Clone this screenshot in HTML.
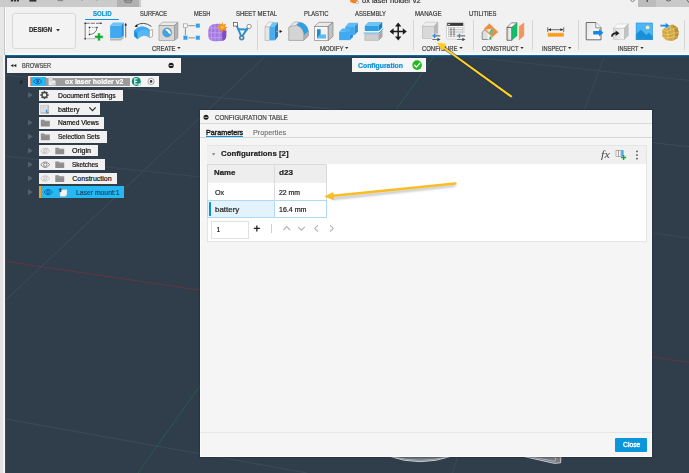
<!DOCTYPE html>
<html>
<head>
<meta charset="utf-8">
<title>ox laser holder v2</title>
<style>
html,body{margin:0;padding:0;}
body{width:689px;height:473px;overflow:hidden;position:relative;background:#303d4b;font-family:"Liberation Sans",sans-serif;}
.a{position:absolute;}
.t{position:absolute;white-space:nowrap;line-height:1;transform-origin:0 50%;-webkit-text-stroke:0.2px currentColor;}
svg.full{position:absolute;left:0;top:0;width:689px;height:473px;}
.sep{position:absolute;top:20px;width:1px;height:30px;background:#d6d6d6;}
.row{position:absolute;height:11px;background:#f1f1f1;left:38.7px;}
</style>
</head>
<body>
<!-- canvas lines -->
<svg class="full" viewBox="0 0 689 473">
<g fill="none" stroke-width="1">
<line x1="469" y1="57" x2="689" y2="80.4" stroke="#3b4855"/>
<line x1="604" y1="57" x2="584.5" y2="109.8" stroke="#3b4855"/>
<line x1="652" y1="233" x2="689" y2="238" stroke="#3b4855"/>
<line x1="6" y1="299.8" x2="264.6" y2="57" stroke="#44515c" stroke-width="0.8"/>
<line x1="6" y1="75.2" x2="689" y2="146.6" stroke="#414e59" stroke-width="0.8"/>
<line x1="6" y1="156.2" x2="200" y2="177" stroke="#3d4a56" stroke-width="0.8"/>
<line x1="5.8" y1="419" x2="200" y2="453.8" stroke="#3d4a57"/>
<line x1="200" y1="453.8" x2="307" y2="473" stroke="#3d4a57"/>
<line x1="457.5" y1="457" x2="452.5" y2="473" stroke="#3b4855"/>
<line x1="6" y1="261.5" x2="689" y2="362.3" stroke="#7a3139" stroke-width="0.7"/>
<line x1="433.5" y1="57" x2="138" y2="473" stroke="#23644f" stroke-width="0.8"/>
</g>
<!-- model outlines below dialog -->
<path d="M388.3 456 Q420 467.4 452.3 456 Z" fill="#70777e" stroke="#dfe4e9" stroke-width="0.8"/>
<path d="M394 457 Q420 463.6 446.6 457" fill="none" stroke="#c4c8cc" stroke-width="0.6"/>
<path d="M519.4 455.5 L554.5 463.4 L560.6 462.8 L561 455.5 Z" fill="#777a7e" stroke="#dfe4e9" stroke-width="0.8"/>
<path d="M530 456.6 L555 461.4 L556 456.6" fill="none" stroke="#c9ccd0" stroke-width="0.6"/>

</svg>

<!-- left strip -->
<div class="a" style="left:0;top:0;width:3.2px;height:473px;background:#e2e2e2;"></div>
<div class="a" style="left:0;top:0;width:3.7px;height:55px;background:#e7e7e7;"></div>
<div class="a" style="left:3.7px;top:0;width:1.3px;height:55px;background:#c6c6c6;"></div>
<div class="a" style="left:3.2px;top:55px;width:1.5px;height:418px;background:#f4f4f4;"></div>
<div class="a" style="left:4.6px;top:55.4px;width:1.7px;height:418px;background:linear-gradient(90deg,#0a7cc0,#0b5d94 45%,#143c58);"></div>

<!-- toolbar -->
<div class="a" style="left:4.9px;top:6px;width:685px;height:49.6px;background:#f1f1f1;"></div>
<div class="a" style="left:5px;top:6px;width:0.9px;height:49px;background:#fbfbfb;"></div>
<div class="a" style="left:4.9px;top:52.4px;width:685px;height:3.1px;background:linear-gradient(#f1f1f1,#fbf9f7 55%,#fbf9f7);"></div>
<div class="a" style="left:4.6px;top:55.4px;width:685px;height:2.1px;background:linear-gradient(#0a7cc0,#0b5d94 45%,#143c58);"></div>
<!-- top strip -->
<div class="a" style="left:0;top:0;width:689px;height:6.5px;background:#f0f0f0;"></div>
<div class="a" style="left:0;top:0;width:141.3px;height:6.5px;background:#cbcbcb;"></div>
<div class="a" style="left:117px;top:0;width:21.9px;height:6.5px;background:#b1b1b1;"></div>
<div class="a" style="left:638px;top:0;width:51px;height:6.5px;background:#c9c9c9;"></div>
<div class="a" style="left:638px;top:0;width:18px;height:6.5px;background:#bcbcbc;"></div>
<div class="a" style="left:352.2px;top:57.9px;width:74px;height:14.3px;background:#f6f6f6;"></div>
<svg class="full" viewBox="0 0 689 473">
<circle cx="417.1" cy="65.1" r="4.8" fill="#20b91f"/>
<path d="M414.6 65.2 L416.4 67.1 L419.8 63.2" fill="none" stroke="#fff" stroke-width="1.3" stroke-linecap="round" stroke-linejoin="round"/>
<!-- top strip cropped icons -->
<g fill="#333">
<rect x="10.8" y="0" width="2.2" height="1.5"/><rect x="13.8" y="0" width="2.2" height="1.5"/><rect x="16.8" y="0" width="2.2" height="1.5"/>
<rect x="29.4" y="0" width="7" height="1.6"/>
</g>
<g fill="#8a8a8a">
<rect x="57.6" y="0" width="5.6" height="1.2"/>
<rect x="81.6" y="0" width="0.8" height="1"/>
<rect x="96.6" y="0" width="0.8" height="1"/>
</g>
<path d="M124.6 0 L125.6 2.6 L131 2.6 L132 0 Z" fill="none" stroke="#6a6a6a" stroke-width="0.7"/>
<rect x="123.6" y="0.6" width="8.6" height="0.7" fill="#777"/>
<!-- title cropped -->
<path d="M350.2 0 L357.6 0 L357.6 2.2 L354 3.4 L350.2 2 Z" fill="#f5821f"/>
<rect x="356" y="1.4" width="2.4" height="2.4" fill="#f2f2f2" stroke="#999" stroke-width="0.4"/>
<!-- right icons -->
<path d="M630.4 0 L632.4 1.8 M634.6 0 L632.8 1.8" stroke="#444" stroke-width="0.8" fill="none"/>
<rect x="646.6" y="0" width="1.2" height="2" fill="#444"/>
<path d="M666 0 Q668.6 2.4 671 0" fill="none" stroke="#555" stroke-width="0.9"/>
<path d="M687 0 Q688 2 689 2.4" fill="none" stroke="#555" stroke-width="0.9"/>
</svg>
<div class="a" style="left:362px;top:-3.2px;width:62px;height:8px;overflow:hidden;"><div class="t" style="left:0;top:0;font-size:8px;color:#333;transform:scaleX(0.93);">ox laser holder v2</div></div>


<!-- design button -->
<div class="a" style="left:11.8px;top:13.1px;width:63.8px;height:36px;border:1.2px solid #d9d9d9;border-radius:3px;background:#f3f3f3;box-sizing:border-box;"></div>
<!-- SOLID underline -->
<div class="a" style="left:85px;top:18.7px;width:34.4px;height:1.8px;background:#0a93e0;border-radius:1px;"></div>
<div class="sep" style="left:257px"></div>
<div class="sep" style="left:412.5px"></div>
<div class="sep" style="left:472.5px"></div>
<div class="sep" style="left:532px"></div>
<div class="sep" style="left:578.3px"></div>
<div class="sep" style="left:684px"></div>
<svg class="full" viewBox="0 0 689 473">
<!-- dropdown arrows -->
<g fill="#333">
<path d="M56.1 29 L59.9 29 L58 31.5 Z"/>
<path d="M177.2 46.9 L180.6 46.9 L178.9 49.1 Z"/>
<path d="M345 46.9 L348.4 46.9 L346.7 49.1 Z"/>
<path d="M459.3 46.9 L462.7 46.9 L461 49.1 Z"/>
<path d="M520.3 46.9 L523.7 46.9 L522 49.1 Z"/>
<path d="M568 46.9 L571.4 46.9 L569.7 49.1 Z"/>
<path d="M640.3 46.9 L643.7 46.9 L642 49.1 Z"/>
</g>
<!-- 1 create sketch -->
<g>
<rect x="85.2" y="23.3" width="15.7" height="15.5" fill="#f8f8f8"/>
<path d="M85.2 23.3 H100.9" stroke="#444" stroke-width="0.7" stroke-dasharray="4.4 1" fill="none"/>
<path d="M85.2 23.3 V38.8" stroke="#4a4a4a" stroke-width="0.7" fill="none"/>
<path d="M86.4 38.7 H95" stroke="#bcbcbc" stroke-width="1.1" fill="none"/>
<path d="M89.4 27.4 H97 M89.4 27.4 V34.6" fill="none" stroke="#555" stroke-width="0.6" stroke-dasharray="1.6 0.9"/>
<path d="M97 27.4 Q96.6 34 89.4 34.6" fill="none" stroke="#444" stroke-width="0.7"/>
<g fill="#222"><rect x="84.5" y="22.6" width="1.4" height="1.4"/><rect x="100.2" y="22.6" width="1.4" height="1.4"/><rect x="84.5" y="38.1" width="1.4" height="1.4"/><rect x="88.8" y="26.8" width="1.2" height="1.2"/><rect x="96.4" y="26.8" width="1.2" height="1.2"/><rect x="88.8" y="34" width="1.2" height="1.2"/></g>
<path d="M97.7 33.1 h2.6 v2.5 h2.8 v2.6 h-2.8 v2.5 h-2.6 v-2.5 h-2.9 v-2.6 h2.9 z" fill="#13a82f" stroke="#f3f3f3" stroke-width="0.4"/>
</g>
<!-- 2 extrude -->
<g>
<path d="M110.1 38 L121.2 38 L123.7 35.4 L123.7 37.9 L121.2 40.5 L110.1 40.5 Z" fill="#b4b4b4"/>
<path d="M110.1 38.3 L121.2 38.3 L123.7 35.7" fill="none" stroke="#f4f4f4" stroke-width="0.6"/>
<path d="M110.1 25.6 L112.9 22.5 L123.7 22.5 L121.2 25.6 Z" fill="#6fc6f6"/>
<path d="M121.2 25.6 L123.7 22.5 L123.7 35.2 L121.2 38 Z" fill="#1f8cd6"/>
<rect x="110.1" y="25.6" width="11.1" height="12.4" fill="#41a9ef"/>
<line x1="125.7" y1="24.6" x2="125.7" y2="37.5" stroke="#333" stroke-width="0.7"/>
<path d="M125.7 22.8 L127 25.6 L124.4 25.6 Z" fill="#222"/>
</g>
<!-- 3 revolve -->
<g>
<path d="M135.6 25.8 Q143.4 20.6 151.4 26.4" fill="none" stroke="#2a2a2a" stroke-width="0.8"/>
<path d="M134.4 26.6 L137.2 24.2 L137.6 27.2 Z" fill="#1c1c1c"/>
<path d="M134.2 30.6 Q141.6 23.4 149.4 29.2 L149.4 37.6 Q143 33 137.6 39.2 L134.2 36.2 Z" fill="#56b7f4"/>
<path d="M134.2 30.6 Q141.6 23.4 149.4 29.2 L149.4 31.4 Q142 26.6 137.4 33.2 Z" fill="#3fa8ee"/>
<path d="M134.2 30.6 L137.4 33.2 L137.6 39.2 L134.2 36.2 Z" fill="#1f8cd6"/>
<path d="M149.4 30.6 L152.6 29.6 L152.6 36.4 L149.4 37.8 Z" fill="#fbfbfb" stroke="#8a6a50" stroke-width="0.5"/>
</g>
<!-- 4 hole -->
<g>
<path d="M159 25.5 L162.5 22.2 L177.9 22.2 L174.5 25.5 Z" fill="#ebebeb" stroke="#808080" stroke-width="0.5"/>
<path d="M174.5 25.5 L177.9 22.2 L177.9 37.8 L174.5 40.5 Z" fill="#b4b4b4" stroke="#808080" stroke-width="0.5"/>
<rect x="159" y="25.5" width="15.5" height="15" fill="#d8d8d8" stroke="#808080" stroke-width="0.5"/>
<circle cx="167.1" cy="32.5" r="4.5" fill="#38a5ea" stroke="#858c92" stroke-width="0.6"/>
<path d="M165.4 29 Q170.6 28.6 171 33.8 Q168.6 34.4 167.6 31.6 Q166.2 31 165.4 29 Z" fill="#ffffff"/>
</g>
<!-- 5 pattern -->
<g>
<line x1="188.3" y1="25.7" x2="195" y2="25.7" stroke="#666" stroke-width="0.7"/>
<line x1="185.4" y1="28.2" x2="185.4" y2="35.2" stroke="#666" stroke-width="0.7"/>
<line x1="188.3" y1="37.8" x2="195" y2="37.8" stroke="#666" stroke-width="0.7"/>
<rect x="183.6" y="23.9" width="3.6" height="3.6" fill="#fbfbfb" stroke="#777" stroke-width="0.5"/>
<rect x="195.9" y="23.7" width="4" height="4" fill="#2ba0ec" stroke="#8fd0f6" stroke-width="0.3"/>
<rect x="183.4" y="35.8" width="4" height="4" fill="#2ba0ec" stroke="#8fd0f6" stroke-width="0.3"/>
<rect x="195.9" y="35.8" width="4" height="4" fill="#2ba0ec" stroke="#8fd0f6" stroke-width="0.3"/>
</g>
<!-- 6 form -->
<g>
<path d="M208.3 31 Q208.6 25.4 213.4 24.2 Q218 23.2 222 24.6 Q226.2 26.4 226.4 31.4 L226.2 36.4 Q225.6 40.6 221 41.1 L214.4 41.2 Q208.6 40.8 208.3 36 Z" fill="#a478e0"/>
<path d="M222.2 30.4 Q224.8 29.6 226.3 30.8 L226.2 36.4 Q225.8 39.6 222.6 40.8 Q222 35 222.2 30.4 Z" fill="#7d4fc2"/>
<path d="M209 32.8 L222 32.8 M215 24.2 L215 40.8 M209.4 28.2 Q215 27.2 221.6 28.6 M209.4 37.4 Q215 38.6 222 37.4 M211.6 25.4 Q210.8 33 211.6 40.4 M218.8 24.2 Q219.6 33 218.8 40.8" fill="none" stroke="#cbb3f1" stroke-width="0.6"/>
<path d="M222.2 21.8 L223.3 24.8 L226.3 23.5 L225 26.4 L227.8 27.4 L225 28.4 L226.2 31.3 L223.3 30 L222 32.6 L221.1 29.8 L218 30.6 L219.5 27.9 L216.8 26.4 L219.8 25.7 L219 22.9 L221.5 24.5 Z" fill="#f7931e"/>
<circle cx="222.2" cy="27.2" r="1.5" fill="#fdbd3a"/>
</g>
<!-- 7 derive Y -->
<g>
<path d="M236.6 25.4 L241.2 36.2 M248 27.6 L242.2 36.2" fill="none" stroke="#2a8fd0" stroke-width="1.9" stroke-linecap="round"/>
<path d="M238.4 29.2 L246.8 29.6" fill="none" stroke="#2a8fd0" stroke-width="2" stroke-linecap="round"/>
<rect x="233.6" y="22.3" width="3.8" height="3.8" fill="#fbfbfb" stroke="#3a3a3a" stroke-width="0.6"/>
<circle cx="249.1" cy="26.5" r="2.2" fill="#fbfbfb" stroke="#555" stroke-width="0.6"/>
<circle cx="241.7" cy="37.8" r="2.7" fill="#2a8fd0"/>
<circle cx="241.7" cy="37.8" r="1.6" fill="#d8d8d8" stroke="#555" stroke-width="0.5"/>
</g>
<!-- 8 press pull -->
<g>
<path d="M265 27 L268.6 22.2 L273 22.2 L269.6 27 Z" fill="#f4f4f4" stroke="#8e8e8e" stroke-width="0.4"/>
<rect x="265" y="27" width="4.6" height="13.4" fill="#e6e6e6" stroke="#8e8e8e" stroke-width="0.4"/>
<path d="M269.6 27 L273 22.2 L278 22.2 L274.8 27 Z" fill="#6cc4f3"/>
<rect x="269.6" y="27" width="5.2" height="13.4" fill="#45adf0"/>
<path d="M274.8 27 L278 22.2 L278 36.4 L274.8 40.4 Z" fill="#1b7fc4"/>
<line x1="276.4" y1="31.4" x2="280.2" y2="31.4" stroke="#e9a77a" stroke-width="0.9"/>
<path d="M282.4 31.4 L279.6 29.8 L279.6 33 Z" fill="#222"/>
</g>
<!-- 9 fillet -->
<g>
<path d="M288.9 27.6 L294.4 22.2 L299 22.2 Q307 23 308.3 31 L308.3 36 L303.6 40.4 L288.9 40.4 Z" fill="#d6d6d6" stroke="#8e8e8e" stroke-width="0.5"/>
<path d="M288.9 27.6 L294.4 22.2 L299 22.2 L296 25.4 Q292 26 288.9 27.6 Z" fill="#ededed" stroke="#8e8e8e" stroke-width="0.4"/>
<path d="M303.6 35.4 L308.3 31 L308.3 36 L303.6 40.4 Z" fill="#b2b2b2" stroke="#8e8e8e" stroke-width="0.4"/>
<path d="M296.2 25.2 L299.2 22.2 Q307.2 23 308.3 31.2 L303.8 35.2 Q303.4 27.4 296.2 25.2 Z" fill="#2f9fe4"/>
<path d="M288.9 27.6 Q292.4 25.6 296.2 25.2 Q303.4 27.4 303.6 35.4 L303.6 40.4 L288.9 40.4 Z" fill="#d4d4d4" stroke="#8e8e8e" stroke-width="0.4"/>
</g>
<!-- 10 shell -->
<g>
<path d="M314.4 26.5 L318.8 22.3 L333 22.3 L328 26.5 Z" fill="#e9e9e9" stroke="#777" stroke-width="0.6"/>
<path d="M328 26.5 L333 22.3 L333 36.4 L328 40.6 Z" fill="#c2c2c2" stroke="#777" stroke-width="0.6"/>
<rect x="314.4" y="26.5" width="13.6" height="14.1" fill="#f8f8f8" stroke="#777" stroke-width="0.6"/>
<rect x="317" y="29.3" width="9" height="9.1" fill="#e4e4e4"/>
<path d="M320.6 29.3 L326 29.3 L326 34.4 L320.6 34.4 Z" fill="#f2f2f2"/>
<path d="M317 29.3 L320.6 29.3 L320.6 34.4 L317 38.4 Z" fill="#1f8cd6"/>
<path d="M320.6 34.4 L326 34.4 L326 38.4 L317 38.4 Z" fill="#5bbcf5"/>
</g>
<!-- 11 combine -->
<g>
<path d="M345.3 26.4 L348.8 22.8 L357.9 22.8 L354.6 26.4 Z" fill="#5fbcf5"/>
<path d="M354.6 26.4 L357.9 22.8 L357.9 31.6 L354.6 35 Z" fill="#2a90dc"/>
<rect x="345.3" y="26.4" width="9.3" height="8.6" fill="#41a9ef"/>
<path d="M339.1 31.8 L342.4 28.4 L350.6 28.4 L349.9 31.8 Z" fill="#52b4f3"/>
<path d="M349.9 31.8 L350.6 28.4 L354.6 28.4 L354.6 35 L351.4 35 L349.9 40.1 Z" fill="#41a9ef"/>
<path d="M349.9 35 L353 35 L353 37 L349.9 40.1 Z" fill="#2a90dc"/>
<rect x="339.1" y="31.8" width="10.8" height="8.3" fill="#41a9ef"/>
</g>
<!-- 12 split -->
<g>
<path d="M364.8 25.6 L368.4 22.1 L382.2 22.1 L378.6 25.6 Z" fill="#6cc4f3"/>
<path d="M378.6 25.6 L382.2 22.1 L382.2 27.8 L378.6 31.2 Z" fill="#1b7fc4"/>
<rect x="364.8" y="25.6" width="13.8" height="5.6" fill="#2f9fe4"/>
<path d="M364.8 34.6 L378.6 34.6 L382.2 31 L382.2 36.8 L378.6 40.4 L364.8 40.4 Z" fill="#cfcfcf" stroke="#999" stroke-width="0.4"/>
<path d="M378.6 34.6 L382.2 31 L382.2 36.8 L378.6 40.4 Z" fill="#a8a8a8"/>
<path d="M363.6 33 L379 33 L383.4 28.8" fill="none" stroke="#2f9fe4" stroke-width="1"/>
<path d="M363.6 31.8 L379 31.8 L383.4 27.6" fill="none" stroke="#fafafa" stroke-width="0.9"/>
</g>
<!-- 13 move -->
<g fill="#1c1c1c" stroke="none">
<rect x="397.45" y="25" width="1.5" height="13"/>
<rect x="392" y="30.75" width="12.6" height="1.5"/>
<path d="M398.2 22.6 L401.4 26.6 L395 26.6 Z"/>
<path d="M398.2 40.6 L401.4 36.6 L395 36.6 Z"/>
<path d="M389.6 31.5 L393.6 28.3 L393.6 34.7 Z"/>
<path d="M406.8 31.5 L402.8 28.3 L402.8 34.7 Z"/>
</g>
<!-- 14 configure -->
<g>
<path d="M422.2 26.3 L425.6 22.2 L437.8 22.2 L434.2 26.3 Z" fill="#eeeeee" stroke="#a6a6a6" stroke-width="0.4"/>
<path d="M434.2 26.3 L437.8 22.2 L437.8 34.6 L434.2 38.5 Z" fill="#b9b9b9" stroke="#a6a6a6" stroke-width="0.4"/>
<rect x="422.2" y="26.3" width="12" height="12.2" fill="#d9d9d9" stroke="#a6a6a6" stroke-width="0.4"/>
<rect x="431.6" y="33.4" width="9.4" height="7.8" fill="#f1f1f1" opacity="0.55"/>
<line x1="432.3" y1="35.9" x2="440.3" y2="35.9" stroke="#555" stroke-width="1"/>
<line x1="432.3" y1="39.5" x2="438" y2="39.5" stroke="#666" stroke-width="0.9"/>
<path d="M440.6 39.5 L437.4 37.8 L437.4 41.2 Z" fill="#4a4a4a"/>
<rect x="433.9" y="33.7" width="1.3" height="4.2" rx="0.5" fill="#1890f0"/>
</g>
<!-- 15 config table -->
<g>
<rect x="446.5" y="22.4" width="17.4" height="16.6" rx="1.2" fill="#fbfbfb" stroke="#c9c9c9" stroke-width="0.8"/>
<rect x="447.2" y="22.9" width="16" height="3" fill="#3a3a3a"/>
<rect x="447.9" y="23.9" width="2.2" height="0.9" fill="#f4f4f4"/>
<path d="M448.6 29.7 H462.2 M448.6 32 H462.2 M448.6 34.2 H462.2" stroke="#777" stroke-width="0.5" fill="none"/>
<path d="M451 27.4 V36.9 M454 27.4 V36.9" stroke="#444" stroke-width="0.7" fill="none"/>
<rect x="448.6" y="27.4" width="13.6" height="9.5" fill="none" stroke="#999" stroke-width="0.4"/>
<rect x="456.2" y="33.4" width="9.4" height="7.8" fill="#f4f4f4" opacity="0.75"/>
<line x1="456.9" y1="35.9" x2="465.2" y2="35.9" stroke="#555" stroke-width="1"/>
<line x1="456.9" y1="39.5" x2="463" y2="39.5" stroke="#666" stroke-width="0.9"/>
<path d="M465.5 39.5 L462.3 37.8 L462.3 41.2 Z" fill="#4a4a4a"/>
<rect x="458.8" y="33.7" width="1.3" height="4.2" rx="0.5" fill="#1890f0"/>
</g>
<!-- 16 construct plane -->
<g>
<path d="M482.2 39.5 L482.2 32.3 L484.4 30 L488 30 L491.1 33 L491.1 39.5 Z" fill="#dedede" stroke="#555" stroke-width="0.6"/>
<path d="M487.6 33 L491.1 33 L491.1 39.5 L487.6 39.5 Z" fill="#f6f6f6"/>
<path d="M483.9 28.6 L489.4 23.1 L498.5 32 L492.8 37.2 Z" fill="#f08c42" stroke="#f6f1ec" stroke-width="0.7"/>
<path d="M486 29.4 L489.2 29 L492.6 28.6 L490.4 33.4 Z" fill="#f6e3d2"/>
<path d="M492.4 28.8 L493.4 29.8 L492.6 35.2 L490 34.6 Z" fill="#8fb27c"/>
<path d="M491.4 28.6 L492.6 29.2 L490.2 33.8 L489.2 33.2 Z" fill="#35c274"/>
<path d="M484.2 29 L492.6 37" stroke="#ee7f36" stroke-width="1" fill="none"/>
<rect x="489.5" y="36.6" width="1.5" height="2.6" fill="#16b657"/>
</g>
<!-- 17 construct 2 -->
<g>
<defs><linearGradient id="g17" x1="0" x2="1" y1="0" y2="0"><stop offset="0" stop-color="#d2d2d2"/><stop offset="1" stop-color="#fbfbfb"/></linearGradient></defs>
<path d="M507 27.4 L511.5 22.9 L517.1 22.9 L511.8 27.4 Z" fill="#f8f8f8" stroke="#444" stroke-width="0.6"/>
<path d="M507 27.4 L511.8 27.4 L511.8 40.3 L507 40.3 Z" fill="url(#g17)" stroke="#444" stroke-width="0.7"/>
<path d="M511.8 27.4 L517.1 22.9 L517.1 35.7 L511.8 40.3 Z" fill="#12bf69" stroke="#3a7a58" stroke-width="0.3"/>
<path d="M519.2 26.3 L523.9 22.9 L523.9 35.7 L519.2 39.9 Z" fill="#f0985c" stroke="#e58445" stroke-width="0.4"/>
</g>
<!-- 18 inspect -->
<g>
<line x1="547.8" y1="29.7" x2="563.6" y2="29.7" stroke="#333" stroke-width="0.7"/>
<line x1="547.7" y1="27.2" x2="547.7" y2="32.1" stroke="#777" stroke-width="1"/>
<line x1="563.7" y1="27.2" x2="563.7" y2="32.1" stroke="#777" stroke-width="1"/>
<path d="M548.4 29.7 L551 28.3 L551 31.1 Z M563 29.7 L560.4 28.3 L560.4 31.1 Z" fill="#222"/>
<rect x="547.8" y="32.9" width="16" height="3.7" fill="#f89a1c"/>
<path d="M549.6 32.9 v1.5 M551.6 32.9 v1 M553.6 32.9 v1.5 M555.6 32.9 v1 M557.6 32.9 v1.5 M559.6 32.9 v1 M561.6 32.9 v1.5" stroke="#fbd27a" stroke-width="0.6"/>
</g>
<!-- 19 insert doc -->
<g>
<defs><linearGradient id="g19" x1="0" x2="1" y1="0" y2="1"><stop offset="0" stop-color="#e4e4e4"/><stop offset="1" stop-color="#ffffff"/></linearGradient></defs>
<path d="M586.2 22.5 L595.8 22.5 L601 27.8 L601 39.8 L586.2 39.8 Z" fill="url(#g19)" stroke="#4a4a4a" stroke-width="0.8" stroke-linejoin="round"/>
<path d="M595.8 22.5 L595.8 27.8 L601 27.8" fill="#fdfdfd" stroke="#4a4a4a" stroke-width="0.6"/>
<path d="M593.2 31.1 L599 31.1 L599 29.1 L603.4 32.8 L599 36.5 L599 34.5 L593.2 34.5 Z" fill="#1587e8"/>
</g>
<!-- 20 insert box -->
<g>
<defs><linearGradient id="g20" x1="0" x2="1" y1="0" y2="0"><stop offset="0" stop-color="#dcdcdc"/><stop offset="1" stop-color="#f4f4f4"/></linearGradient></defs>
<path d="M613.2 28.2 L617.6 24 L628.3 24 L624.1 28.2 Z" fill="#f9f9f9" stroke="#b5b5b5" stroke-width="0.4"/>
<path d="M624.1 28.2 L628.3 24 L628.3 35.4 L624.1 39.7 Z" fill="#c2c2c2" stroke="#b0b0b0" stroke-width="0.4"/>
<rect x="613.2" y="28.2" width="10.9" height="11.5" fill="url(#g20)" stroke="#b5b5b5" stroke-width="0.4"/>
<path d="M611.8 36.6 Q612.4 33.2 616.4 33.2" fill="none" stroke="#1e1e1e" stroke-width="1.7"/>
<path d="M615.6 30.4 L619.5 33.2 L615.6 36 Z" fill="#1e1e1e"/>
</g>
<!-- 21 image -->
<g>
<rect x="635.9" y="22.8" width="16.8" height="17.1" fill="#4fb6f6"/>
<path d="M635.9 39.9 L635.9 34.3 L641 29.8 L646.2 35 L648.8 32.8 L652.7 36.2 L652.7 39.9 Z" fill="#1a8ed6"/>
<circle cx="647.6" cy="27.4" r="1.9" fill="#f7f1ac"/>
<rect x="636.2" y="23.1" width="16.2" height="16.5" fill="none" stroke="#2d9ce8" stroke-width="0.6"/>
</g>
<!-- 22 insert mesh -->
<g>
<path d="M662.2 30.4 L666 26 L672.6 24.6 L677.4 27.2 L678.9 32.8 L677.6 38 L672.4 40.9 L666.2 40.2 L662.4 36.4 Z" fill="#d1a640"/>
<path d="M672.6 24.6 L677.4 27.2 L678.9 32.8 L677.6 38 L672.4 40.9 L674.4 36.6 L674.6 32.6 L673.8 28.6 Z" fill="#a98129" opacity="0.6"/>
<path d="M662.6 30.2 L667.6 31.6 L673.8 28.8 L677.4 27.2 M662.2 33.6 L667.8 34.8 L674.6 32.8 L678.9 32.8 M663 36.8 L668.2 38 L674.4 36.6 L677.8 37.4 M667.6 31.6 L668.2 38 L666.2 40.2 M673.8 28.8 L674.4 36.6 L672.4 40.9 M666 26 L667.6 31.6 M670 25.4 L670.6 30.2" fill="none" stroke="#edd58c" stroke-width="0.6"/>
<path d="M660.2 24.6 L665.4 24.6 L665.4 22.4 L669.8 25.7 L665.4 29 L665.4 26.8 L660.2 26.8 Z" fill="#1587e8" stroke="#f1f1f1" stroke-width="0.5"/>
</g>

</svg>

<!-- browser -->
<div class="a" style="left:7.3px;top:58.1px;width:173.8px;height:14.5px;background:#f3f3f3;"></div>
<div class="a" style="left:28.3px;top:76px;width:130.8px;height:10.9px;background:#f3f3f3;"></div>
<div class="a" style="left:30px;top:77.3px;width:1.2px;height:8.6px;background:#ee917c;"></div>
<div class="a" style="left:31.1px;top:77.3px;width:15px;height:8.6px;background:#29b6f2;"></div>
<div class="a" style="left:46.1px;top:77.5px;width:83.7px;height:8.3px;background:#9b9b9b;"></div>
<div class="row" style="top:89.8px;width:84.2px;height:11.2px"></div>
<div class="row" style="top:103.3px;width:61.4px;height:11.4px"></div>
<div class="row" style="top:117.3px;width:65.7px;height:11.3px"></div>
<div class="row" style="top:131px;width:68.4px;height:11.6px"></div>
<div class="row" style="top:145.1px;width:59.4px;height:11.4px"></div>
<div class="row" style="top:159.2px;width:66.3px;height:11.2px"></div>
<div class="row" style="top:172.9px;width:78px;height:11.1px"></div>
<div class="row" style="top:186.4px;width:85.7px;height:11.4px;background:#25b8f3"></div>
<div class="a" style="left:38.7px;top:186.4px;width:2.5px;height:11.4px;background:#f2a31c;"></div>
<svg class="full" viewBox="0 0 689 473">
<!-- collapse -->
<g fill="#222">
<path d="M10.7 65.6 L13.4 63.9 L13.4 67.3 Z"/>
<path d="M13.6 65.6 L16.3 63.9 L16.3 67.3 Z"/>
</g>
<circle cx="171.1" cy="65.4" r="2.6" fill="#1c1c1c"/>
<rect x="169.5" y="65" width="3.2" height="0.8" fill="#ddd"/>
<!-- expand arrows -->
<path d="M22.2 79.4 L22.2 83.4 L18.9 83.4 Z" fill="#1f2428"/>
<g fill="#566069" stroke="#727b83" stroke-width="0.3">
<path d="M28.4 92.6 L32.2 95 L28.4 97.4 Z"/>
<path d="M28.4 120.3 L32.2 122.7 L28.4 125.1 Z"/>
<path d="M28.4 134.2 L32.2 136.6 L28.4 139 Z"/>
<path d="M28.4 148.3 L32.2 150.7 L28.4 153.1 Z"/>
<path d="M28.4 162.1 L32.2 164.5 L28.4 166.9 Z"/>
<path d="M28.4 175.9 L32.2 178.3 L28.4 180.7 Z"/>
<path d="M28.4 189.7 L32.2 192.1 L28.4 194.5 Z"/>
</g>
<!-- row1 eye -->
<g>
<path d="M33.4 81.5 Q37.7 76.7 42 81.5 Q37.7 86.3 33.4 81.5 Z" fill="none" stroke="#0d65a8" stroke-width="0.95"/>
<circle cx="37.7" cy="81.5" r="1.4" fill="#0d65a8"/>
</g>
<!-- row1 doc icon -->
<g>
<rect x="48.7" y="77.5" width="3.8" height="7.8" rx="0.6" fill="#ededed" stroke="#c2c2c2" stroke-width="0.5"/>
<rect x="49.4" y="78.4" width="2.4" height="3" fill="#d2d2d2"/>
<rect x="51.8" y="80.4" width="3.6" height="4.9" rx="0.5" fill="#f6f6f6" stroke="#c8c8c8" stroke-width="0.5"/>
<rect x="52.4" y="82.6" width="2.4" height="2.2" fill="#cfcfcf"/>
</g>
<!-- E badge -->
<circle cx="136.3" cy="81.4" r="4.5" fill="#0d8a72"/>
<path d="M134.4 78.8 H137.6 M134.4 81.4 H137.2 M134.4 84 H137.6 M134.8 78.6 V84.2" stroke="#fff" stroke-width="1" fill="none"/>
<rect x="138.2" y="83.2" width="2.4" height="2.4" fill="#fff" stroke="#0d8a72" stroke-width="0.3"/>
<!-- radio -->
<circle cx="151.1" cy="81.4" r="3.1" fill="#f7f7f7" stroke="#7d7d7d" stroke-width="0.7"/>
<circle cx="151.1" cy="81.4" r="1.3" fill="#333"/>
<!-- gear -->
<g transform="translate(44.5 95)">
<g fill="#444">
<rect x="-0.85" y="-4.1" width="1.7" height="8.2"/>
<rect x="-0.85" y="-4.1" width="1.7" height="8.2" transform="rotate(45)"/>
<rect x="-0.85" y="-4.1" width="1.7" height="8.2" transform="rotate(90)"/>
<rect x="-0.85" y="-4.1" width="1.7" height="8.2" transform="rotate(135)"/>
<circle r="3"/>
</g>
<circle r="1.8" fill="#f1f1f1"/>
</g>
<!-- battery row icon -->
<g>
<rect x="40.8" y="105.2" width="7.4" height="7.8" fill="#e2e2e2" stroke="#b0b0b0" stroke-width="0.5"/>
<path d="M40.8 107.6 H48.2 M43.4 105.2 V113" stroke="#c0c0c0" stroke-width="0.4"/>
<path d="M48.2 105.2 V113 H40.8" fill="none" stroke="#9a9a9a" stroke-width="0.6"/>
<rect x="45.8" y="109.6" width="1.5" height="2.8" fill="#2b9be6"/>
<rect x="46" y="112.2" width="2.8" height="1.2" fill="#8a8a8a"/>
</g>
<path d="M89.3 107.3 L92.5 110.7 L95.7 107.3" fill="none" stroke="#2a2a2a" stroke-width="1.2"/>
<!-- folders -->
<g fill="#8e8e8e">
<path d="M40.8 119.8 H44.2 L45 120.8 H49.8 V126.4 H40.8 Z"/>
<path d="M40.8 133.6 H44.2 L45 134.6 H49.8 V140.2 H40.8 Z"/>
<path d="M55.3 147.7 H58.7 L59.5 148.7 H64.2 V154.3 H55.3 Z"/>
<path d="M55.3 161.5 H58.7 L59.5 162.5 H64.2 V168.1 H55.3 Z"/>
<path d="M55.3 175.3 H58.7 L59.5 176.3 H64.2 V181.9 H55.3 Z"/>
</g>
<g stroke="#a9a9a9" stroke-width="0.4">
<path d="M40.8 121.6 H49.8 M40.8 135.4 H49.8 M55.3 149.5 H64.2 M55.3 163.3 H64.2 M55.3 177.1 H64.2"/>
</g>
<!-- eyes -->
<g fill="none" stroke="#bdbdbd" stroke-width="0.8">
<path d="M40.7 150.9 Q45.2 145.3 49.8 150.9 Q45.2 156.5 40.7 150.9 Z"/>
<circle cx="45.3" cy="150.9" r="1.7"/>
<path d="M42.6 153.6 L48 148.2"/>
<path d="M40.7 178.5 Q45.2 172.9 49.8 178.5 Q45.2 184.1 40.7 178.5 Z"/>
<circle cx="45.3" cy="178.5" r="1.7"/>
<path d="M42.6 181.2 L48 175.8"/>
</g>
<path d="M40.7 164.7 Q45.2 159.1 49.8 164.7 Q45.2 170.3 40.7 164.7 Z" fill="none" stroke="#808080" stroke-width="0.9"/>
<circle cx="45.3" cy="164.7" r="1.7" fill="none" stroke="#808080" stroke-width="0.9"/>
<!-- laser mount eye -->
<path d="M44 192.1 Q48.2 186.7 52.5 192.1 Q48.2 197.5 44 192.1 Z" fill="none" stroke="#0d65a8" stroke-width="0.95"/>
<circle cx="48.2" cy="192.1" r="1.6" fill="none" stroke="#0d65a8" stroke-width="0.9"/>
<circle cx="48.2" cy="192.1" r="0.6" fill="#0d65a8"/>
<!-- component icon -->
<g>
<path d="M61.4 189.6 H67 V195 L65.6 196.6 H60 V191.2 Z" fill="#f6f3ee" stroke="#9fb2bf" stroke-width="0.4"/>
<path d="M65.6 196.6 V195 H67" fill="none" stroke="#9fb2bf" stroke-width="0.4"/>
<path d="M60.4 188 V191.6 M58.6 189.6 H62.2" stroke="#1d3b57" stroke-width="0.8"/>
<path d="M59 190.8 L60.4 192.4 L61.8 190.8 Z" fill="#1d3b57"/>
</g>
</svg>


<!-- dialog -->
<div class="a" style="left:199.9px;top:109.9px;width:452.3px;height:346.8px;background:#f5f5f5;box-shadow:0 0 1.6px rgba(10,16,24,0.75);border:1.6px solid #fcfcfc;box-sizing:border-box;"></div>
<div class="a" style="left:199.8px;top:109.8px;width:452.4px;height:14.2px;background:#f4f4f4;border-bottom:1px solid #dadada;box-sizing:border-box;"></div>
<div class="a" style="left:199.8px;top:136.7px;width:452.4px;height:1px;background:#d6d6d6;"></div>
<div class="a" style="left:206px;top:135.8px;width:37.3px;height:1.5px;background:#0a93e0;"></div>
<!-- card -->
<div class="a" style="left:206.7px;top:145.1px;width:440.1px;height:96.5px;background:#ffffff;border:1px solid #e4e4e4;box-sizing:border-box;"></div>
<div class="a" style="left:207.2px;top:145.6px;width:439.1px;height:18.4px;background:#f0f0f0;"></div>
<!-- table -->
<div class="a" style="left:207px;top:164px;width:119.9px;height:19.6px;background:#eeeeee;border:1px solid #dadada;box-sizing:border-box;"></div>
<div class="a" style="left:207px;top:183.4px;width:119.9px;height:17.2px;background:#ffffff;border:1px solid #dadada;border-top:none;box-sizing:border-box;"></div>
<div class="a" style="left:207px;top:200.3px;width:119.9px;height:17.9px;background:#e2f3fc;border:1px solid #b0daf1;box-sizing:border-box;"></div>
<div class="a" style="left:274.3px;top:200.3px;width:52.6px;height:17.9px;background:#ffffff;border:1px solid #b0daf1;box-sizing:border-box;"></div>
<div class="a" style="left:208.6px;top:201.8px;width:2.5px;height:13.8px;background:#0d8fd6;border-radius:0.6px;"></div>
<div class="a" style="left:274.3px;top:164px;width:1px;height:36.5px;background:#dadada;"></div>
<!-- input -->
<div class="a" style="left:211.2px;top:221px;width:37.6px;height:17.5px;background:#ffffff;border:1px solid #e2e2e2;box-sizing:border-box;"></div>
<div class="a" style="left:271.2px;top:223.7px;width:1px;height:9.2px;background:#cfcfcf;"></div>
<!-- footer -->
<div class="a" style="left:199.8px;top:432px;width:452.4px;height:1px;background:#e6e6e6;"></div>
<div class="a" style="left:615px;top:437.8px;width:31.9px;height:14.1px;background:#0b96dc;border-radius:1px;"></div>
<div class="t" style="left:600.6px;top:149.7px;font-family:'Liberation Serif',serif;font-style:italic;font-size:10px;color:#444;transform:scaleX(1.22);-webkit-text-stroke:0">fx</div>
<svg class="full" viewBox="0 0 689 473">
<circle cx="206" cy="117.3" r="2.5" fill="#1c1c1c"/>
<rect x="204.4" y="116.9" width="3.2" height="0.8" fill="#ddd"/>
<path d="M211.8 153.3 L215.4 153.3 L213.6 155.6 Z" fill="#808080"/>
<!-- columns icon -->
<rect x="616" y="150.3" width="2.4" height="6" fill="#f6f6f6" stroke="#777" stroke-width="0.5"/>
<rect x="618.6" y="150.3" width="2.4" height="6" fill="#f6f6f6" stroke="#777" stroke-width="0.5"/>
<rect x="621.2" y="150.1" width="2.4" height="6.4" fill="#4aa8ee"/>
<path d="M622.9 155 h1.4 v1.8 h1.8 v1.4 h-1.8 v1.8 h-1.4 v-1.8 h-1.8 v-1.4 h1.8 z" fill="#17a535"/>
<!-- dots -->
<g fill="#444"><rect x="636.2" y="150.7" width="1.5" height="1.5"/><rect x="636.2" y="154.3" width="1.5" height="1.5"/><rect x="636.2" y="157.9" width="1.5" height="1.5"/></g>
<!-- plus -->
<path d="M256.2 225.4 h1.3 v2.4 h2.4 v1.3 h-2.4 v2.4 h-1.3 v-2.4 h-2.4 v-1.3 h2.4 z" fill="#222"/>
<g fill="none" stroke="#b4b4b4" stroke-width="1.15">
<path d="M283.4 230 L286.7 226.6 L290 230"/>
<path d="M298.2 226.8 L301.5 230.2 L304.8 226.8"/>
<path d="M318 225.2 L314.8 228.4 L318 231.6"/>
<path d="M330 225.2 L333.2 228.4 L330 231.6"/>
</g>
</svg>


<div class="t" style="left:92.5px;top:9.5px;font-size:7px;font-weight:bold;color:#0696d7;transform:scaleX(0.865);">SOLID</div>
<div class="t" style="left:139.5px;top:9.5px;font-size:7px;font-weight:normal;color:#3a3a3a;transform:scaleX(0.817);">SURFACE</div>
<div class="t" style="left:193.5px;top:9.5px;font-size:7px;font-weight:normal;color:#3a3a3a;transform:scaleX(0.815);">MESH</div>
<div class="t" style="left:235.5px;top:9.5px;font-size:7px;font-weight:normal;color:#3a3a3a;transform:scaleX(0.854);">SHEET METAL</div>
<div class="t" style="left:303.5px;top:9.5px;font-size:7px;font-weight:normal;color:#3a3a3a;transform:scaleX(0.839);">PLASTIC</div>
<div class="t" style="left:355.0px;top:9.5px;font-size:7px;font-weight:normal;color:#3a3a3a;transform:scaleX(0.833);">ASSEMBLY</div>
<div class="t" style="left:414.5px;top:9.5px;font-size:7px;font-weight:normal;color:#3a3a3a;transform:scaleX(0.873);">MANAGE</div>
<div class="t" style="left:468.5px;top:9.5px;font-size:7px;font-weight:normal;color:#3a3a3a;transform:scaleX(0.841);">UTILITIES</div>
<div class="t" style="left:151.5px;top:44.5px;font-size:7px;font-weight:normal;color:#3a3a3a;transform:scaleX(0.843);">CREATE</div>
<div class="t" style="left:319.5px;top:44.5px;font-size:7px;font-weight:normal;color:#3a3a3a;transform:scaleX(0.863);">MODIFY</div>
<div class="t" style="left:421.5px;top:44.5px;font-size:7px;font-weight:normal;color:#3a3a3a;transform:scaleX(0.845);">CONFIGURE</div>
<div class="t" style="left:481.5px;top:44.5px;font-size:7px;font-weight:normal;color:#3a3a3a;transform:scaleX(0.830);">CONSTRUCT</div>
<div class="t" style="left:541.5px;top:44.5px;font-size:7px;font-weight:normal;color:#3a3a3a;transform:scaleX(0.807);">INSPECT</div>
<div class="t" style="left:617.5px;top:44.5px;font-size:7px;font-weight:normal;color:#3a3a3a;transform:scaleX(0.802);">INSERT</div>
<div class="t" style="left:28.8px;top:26.1px;font-size:7px;font-weight:bold;color:#2a2a2a;transform:scaleX(0.864);">DESIGN</div>
<div class="t" style="left:21.5px;top:62.0px;font-size:7px;font-weight:normal;color:#444;transform:scaleX(0.807);">BROWSER</div>
<div class="t" style="left:64.7px;top:77.8px;font-size:7px;font-weight:bold;color:#ffffff;transform:scaleX(0.979);">ox laser holder v2</div>
<div class="t" style="left:57.7px;top:91.8px;font-size:7px;font-weight:normal;color:#111;transform:scaleX(0.975);">Document Settings</div>
<div class="t" style="left:57.7px;top:105.7px;font-size:7px;font-weight:normal;color:#111;transform:scaleX(1.004);">battery</div>
<div class="t" style="left:57.7px;top:119.4px;font-size:7px;font-weight:normal;color:#111;transform:scaleX(0.950);">Named Views</div>
<div class="t" style="left:57.7px;top:133.4px;font-size:7px;font-weight:normal;color:#111;transform:scaleX(0.934);">Selection Sets</div>
<div class="t" style="left:72.3px;top:147.2px;font-size:7px;font-weight:normal;color:#111;transform:scaleX(1.017);">Origin</div>
<div class="t" style="left:72.3px;top:161.2px;font-size:7px;font-weight:normal;color:#111;transform:scaleX(0.913);">Sketches</div>
<div class="t" style="left:72.3px;top:174.9px;font-size:7px;font-weight:normal;color:#111;transform:scaleX(1.000);">Construction</div>
<div class="t" style="left:75.5px;top:188.7px;font-size:7px;font-weight:normal;color:#17496b;transform:scaleX(0.972);">Laser mount:1</div>
<div class="t" style="left:357.5px;top:61.5px;font-size:7px;font-weight:bold;color:#0b8fd8;transform:scaleX(0.981);">Configuration</div>
<div class="t" style="left:214.5px;top:113.9px;font-size:7px;font-weight:normal;color:#444;transform:scaleX(0.891);">CONFIGURATION TABLE</div>
<div class="t" style="left:206.0px;top:128.8px;font-size:7.5px;font-weight:normal;color:#1a1a1a;transform:scaleX(0.960);-webkit-text-stroke:0.4px currentColor;">Parameters</div>
<div class="t" style="left:253.3px;top:128.8px;font-size:7.5px;font-weight:normal;color:#6a6a6a;transform:scaleX(0.968);-webkit-text-stroke:0.1px currentColor;">Properties</div>
<div class="t" style="left:220.7px;top:149.8px;font-size:8px;font-weight:bold;color:#222;transform:scaleX(0.980);">Configurations [2]</div>
<div class="t" style="left:213.6px;top:169.2px;font-size:7.5px;font-weight:bold;color:#222;transform:scaleX(1.047);">Name</div>
<div class="t" style="left:279.0px;top:169.2px;font-size:7.5px;font-weight:bold;color:#222;transform:scaleX(1.082);">d23</div>
<div class="t" style="left:214.5px;top:188.6px;font-size:7.5px;font-weight:normal;color:#222;transform:scaleX(0.959);">Ox</div>
<div class="t" style="left:279.0px;top:188.8px;font-size:7px;font-weight:normal;color:#222;transform:scaleX(0.981);">22 mm</div>
<div class="t" style="left:214.5px;top:205.7px;font-size:7.5px;font-weight:normal;color:#222;transform:scaleX(1.059);">battery</div>
<div class="t" style="left:279.0px;top:205.9px;font-size:7px;font-weight:normal;color:#222;transform:scaleX(1.010);">16.4 mm</div>
<div class="t" style="left:217.2px;top:226.4px;font-size:7px;font-weight:bold;color:#222;transform:scaleX(0.717);">1</div>
<div class="t" style="left:622.6px;top:441.1px;font-size:7.5px;font-weight:normal;color:#ffffff;transform:scaleX(0.907);-webkit-text-stroke:0.35px currentColor;">Close</div>

<!-- arrows -->
<svg class="full" viewBox="0 0 689 473">
<defs><filter id="sh" x="-10%" y="-30%" width="120%" height="180%"><feGaussianBlur stdDeviation="1.1"/></filter></defs>
<!-- arrow 1 -->
<g>
<line x1="511.8" y1="96.9" x2="443" y2="47.2" stroke="#141c3a" stroke-opacity="0.55" stroke-width="3.3" stroke-linecap="butt"/>
<line x1="511.8" y1="96.9" x2="442" y2="46.5" stroke="#fdd223" stroke-width="2.1" stroke-linecap="butt"/>
<path d="M437.6 43 L446 44.1 L441.9 50.1 Z" fill="#fccc25" stroke="#fccc25" stroke-width="0.7" stroke-linejoin="round"/>
</g>
<!-- arrow 2 -->
<g>
<line x1="455.4" y1="185.6" x2="332" y2="198.8" stroke="#777" stroke-opacity="0.45" stroke-width="2.4" filter="url(#sh)"/>
<line x1="455.4" y1="183.5" x2="331" y2="196" stroke="#f9bd26" stroke-width="2.4" stroke-linecap="round"/>
<path d="M324.8 196.6 L333 192.4 L333.6 199.8 Z" fill="#f9bd26" stroke="#f9bd26" stroke-width="0.6" stroke-linejoin="round"/>
</g>

</svg>
</body>
</html>
